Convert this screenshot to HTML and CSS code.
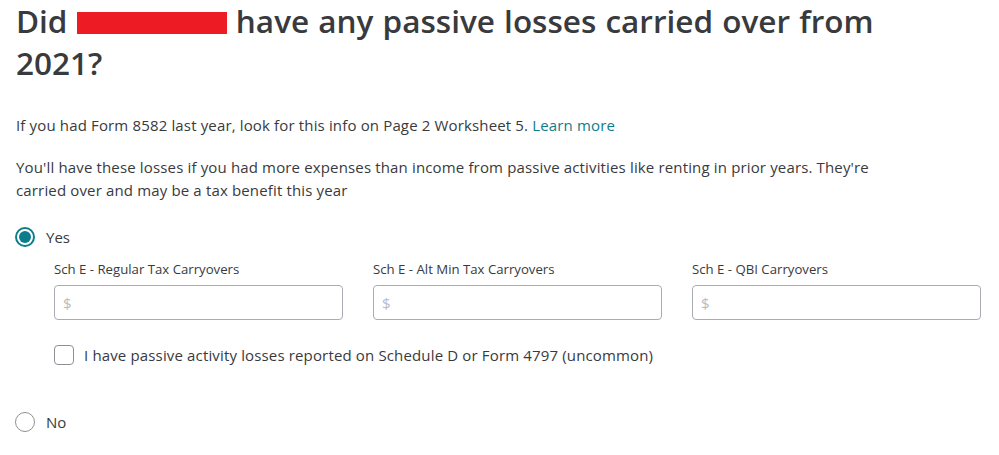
FILE: index.html
```html
<!DOCTYPE html>
<html>
<head>
<meta charset="utf-8">
<link rel="stylesheet" href="styles.css">
</head>
<body>
<div class="page">
  <h1 class="title">Did <span class="redact"></span> have any passive losses carried over from 2021?</h1>
  <p class="hint">If you had Form 8582 last year, look for this info on Page 2 Worksheet 5. <a class="link" href="#">Learn more</a></p>
  <p class="desc">You'll have these losses if you had more expenses than income from passive activities like renting in prior years. They're carried over and may be a tax benefit this year</p>

  <div class="option option-yes">
    <span class="radio checked"></span>
    <span class="option-label">Yes</span>
  </div>

  <div class="sub">
    <div class="fields">
      <div class="field">
        <div class="field-label">Sch E - Regular Tax Carryovers</div>
        <div class="input"><span class="ph">$</span></div>
      </div>
      <div class="field">
        <div class="field-label">Sch E - Alt Min Tax Carryovers</div>
        <div class="input"><span class="ph">$</span></div>
      </div>
      <div class="field">
        <div class="field-label">Sch E - QBI Carryovers</div>
        <div class="input"><span class="ph">$</span></div>
      </div>
    </div>
    <div class="check-row">
      <span class="checkbox"></span>
      <span class="check-label">I have passive activity losses reported on Schedule D or Form 4797 (uncommon)</span>
    </div>
  </div>

  <div class="option option-no">
    <span class="radio"></span>
    <span class="option-label">No</span>
  </div>
</div>
</body>
</html>
```
FILE: styles.css
```css
html, body {
  margin: 0;
  padding: 0;
  background: #ffffff;
}
body {
  font-family: "Open Sans", "Lato", sans-serif;
  color: #393a3d;
}
.page {
  padding: 0 16px;
  width: 880px;
}
.title {
  margin: 0;
  font-size: 31.5px;
  line-height: 42px;
  font-weight: 600;
  color: #393a3d;
  word-spacing: 1px;
}
.redact {
  display: inline-block;
  background: #ed1c24;
  width: 150px;
  height: 22px;
  vertical-align: -1px;
}
.hint {
  margin: 30px 0 0;
  font-size: 15px;
  line-height: 22px;
  letter-spacing: 0.15px;
}
.link {
  color: #0d7d8c;
  text-decoration: none;
}
.desc {
  margin: 20px 0 0;
  font-size: 15px;
  line-height: 23px;
  letter-spacing: 0.15px;
  max-width: 860px;
}
.option {
  display: flex;
  align-items: center;
  height: 24px;
}
.option-yes {
  margin-top: 23px;
}
.option-no {
  margin-top: 45px;
}
.radio {
  box-sizing: border-box;
  width: 20px;
  height: 20px;
  border-radius: 50%;
  border: 1px solid #8d9096;
  margin-left: -1px;
  margin-right: 11px;
  position: relative;
}
.radio.checked {
  border: 2px solid #0d7d8c;
}
.radio.checked::after {
  content: "";
  position: absolute;
  left: 2px;
  top: 2px;
  width: 12px;
  height: 12px;
  border-radius: 50%;
  background: #0d7d8c;
}
.option-label {
  font-size: 15px;
}
.sub {
  padding-left: 38px;
}
.fields {
  display: grid;
  grid-template-columns: repeat(3, 289px);
  column-gap: 30px;
  margin-top: 11px;
}
.field-label {
  font-size: 13.2px;
  line-height: 18px;
  margin-bottom: 7px;
}
.input {
  box-sizing: border-box;
  height: 35px;
  border: 1px solid #a9acb2;
  border-radius: 4px;
  display: flex;
  align-items: center;
  padding-left: 8px;
}
.ph {
  color: #b8bcc2;
  font-size: 15px;
}
.check-row {
  display: flex;
  align-items: center;
  margin-top: 25px;
  height: 20px;
}
.checkbox {
  box-sizing: border-box;
  width: 20px;
  height: 20px;
  border: 1px solid #8d9096;
  border-radius: 4px;
  margin-right: 10px;
}
.check-label {
  font-size: 15px;
  letter-spacing: 0.15px;
}
```
